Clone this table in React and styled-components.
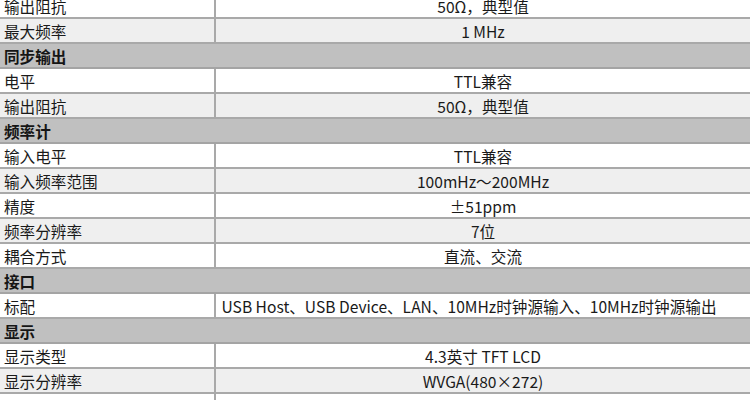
import React from 'react';
import styled, { createGlobalStyle } from 'styled-components';

const GlobalStyle = createGlobalStyle`
  html, body {
    margin: 0;
    padding: 0;
    background: #fff;
    overflow: hidden;
  }
  body {
    font-family: "Noto Sans CJK SC", "Noto Sans", sans-serif;
    color: #1a1a1a;
  }
`;

const rows = [
  { label: '输出阻抗', value: '50Ω，典型值', shade: false },
  { label: '最大频率', value: '1 MHz', shade: true },
  { section: '同步输出' },
  { label: '电平', value: 'TTL兼容', shade: false },
  { label: '输出阻抗', value: '50Ω，典型值', shade: true },
  { section: '频率计' },
  { label: '输入电平', value: 'TTL兼容', shade: false },
  { label: '输入频率范围', value: '100mHz～200MHz', shade: true },
  { label: '精度', value: '±51ppm', shade: false },
  { label: '频率分辨率', value: '7位', shade: true },
  { label: '耦合方式', value: '直流、交流', shade: false },
  { section: '接口' },
  { label: '标配', value: 'USB Host、USB Device、LAN、10MHz时钟源输入、10MHz时钟源输出', shade: false, wide: true },
  { section: '显示' },
  { label: '显示类型', value: '4.3英寸 TFT LCD', shade: false },
  { label: '显示分辨率', value: 'WVGA(480×272)', shade: true },
  { label: '', value: '', shade: false },
];

const Table = styled.div`
  margin-top: -6px;
  width: 750px;
`;

const Row = styled.div`
  display: grid;
  grid-template-columns: 214px 1fr;
  height: 23px;
  border-bottom: 2px solid #a9a9a9;
  background: ${(p) => (p.$shade ? '#efefef' : '#ffffff')};
  font-size: 15.6px;
  line-height: 24px;
`;

const Label = styled.div`
  padding-left: 4px;
  white-space: nowrap;
`;

const Value = styled.div`
  border-left: 2px solid #a9a9a9;
  text-align: center;
  white-space: nowrap;
  padding-right: ${(p) => (p.$wide ? '28px' : '0')};
`;

const Section = styled.div`
  height: 23px;
  border-bottom: 2px solid #a4a4a4;
  background: #c0c0c0;
  padding-left: 4px;
  font-size: 15.6px;
  line-height: 24px;
  font-weight: 700;
  color: #151515;
`;

export default function App() {
  return (
    <>
      <GlobalStyle />
      <Table>
        {rows.map((r, i) =>
          r.section ? (
            <Section key={i}>{r.section}</Section>
          ) : (
            <Row key={i} $shade={r.shade}>
              <Label>{r.label}</Label>
              <Value $wide={r.wide}>{r.value}</Value>
            </Row>
          )
        )}
      </Table>
    </>
  );
}
